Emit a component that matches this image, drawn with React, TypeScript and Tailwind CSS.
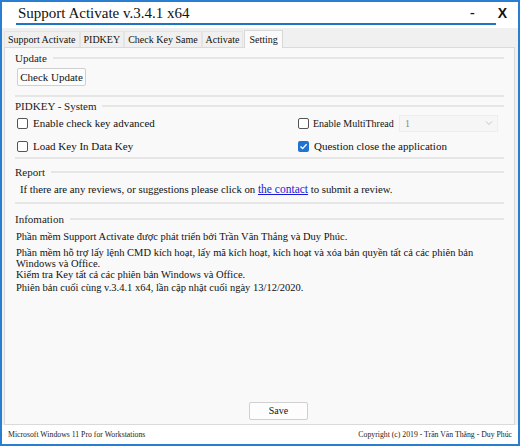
import React from "react";

const serif = { fontFamily: '"Liberation Serif", "Times New Roman", serif' };

function Header({ title }: { title: string }) {
  return (
    <div className="flex items-center gap-[6px] h-[14px] shrink-0">
      <span className="text-[11px] text-[#222] leading-none">{title}</span>
      <div className="flex-1 h-[2px] bg-[#e6e6e6]" />
    </div>
  );
}

function Box({ checked }: { checked?: boolean }) {
  if (checked) {
    return (
      <div className="w-[11px] h-[11px] shrink-0 rounded-[2px] bg-[#1f73d1] flex items-center justify-center">
        <svg width="9" height="9" viewBox="0 0 9 9">
          <path d="M1.5 4.6 L3.6 6.6 L7.6 2.2" stroke="white" strokeWidth="1.4" fill="none" />
        </svg>
      </div>
    );
  }
  return <div className="w-[11px] h-[11px] shrink-0 rounded-[2px] border border-[#555] bg-white" />;
}

export default function App() {
  return (
    <div
      style={serif}
      className="w-[520px] h-[446px] border-2 border-[#2a7ed2] bg-[#f0f0f0] flex flex-col text-[#111] overflow-hidden"
    >
      {/* Title bar */}
      <div className="h-[26px] bg-white flex flex-col shrink-0">
        <div className="flex items-center h-[21px]">
          <span className="pl-[16px] text-[15px] leading-[20px] text-[#111]">
            Support Activate v.3.4.1 x64
          </span>
          <div className="flex-1" />
          <span className="text-[14px] font-bold leading-[20px] mr-[23px]">-</span>
          <span
            className="text-[14px] font-bold leading-[20px] mr-[11px]"
            style={{ fontFamily: '"Liberation Sans", Arial, sans-serif' }}
          >
            X
          </span>
        </div>
        <div className="h-[2px] bg-[#1f74c8] ml-[14px] mr-[22px]" />
      </div>

      {/* Tabs */}
      <div className="flex items-end h-[19px] pl-[2px] shrink-0 bg-[#f0f0f0]">
        {["Support Activate", "PIDKEY", "Check Key Same", "Activate"].map((t) => (
          <div
            key={t}
            className="h-[16px] px-[3px] text-[10px] leading-[16px] whitespace-nowrap border-t border-l border-r border-[#e4e4e4] bg-[#f0f0f0]"
          >
            {t}
          </div>
        ))}
        <div className="h-[18px] ml-[1px] px-[4px] text-[10px] leading-[17px] bg-[#fafafa] border-t border-l border-r border-[#d8d8d8] -mb-[1px] relative z-10">
          Setting
        </div>
      </div>

      {/* Content panel */}
      <div className="flex-1 ml-[2px] mr-[3px] bg-[#f9f9f9] border border-[#dadada] flex flex-col px-[10px] pt-[3px]">
        <Header title="Update" />
        <div className="flex pl-[2px] mt-[3px]">
          <div className="h-[18px] w-[69px] text-center text-[11px] leading-[16px] border border-[#d0d0d0] bg-[#fdfdfd] rounded-[2px]">
            Check Update
          </div>
        </div>
        <div className="h-[2px] bg-[#e6e6e6] mt-[9px] shrink-0" />
        <div className="mt-[2px]">
          <Header title="PIDKEY - System" />
        </div>
        <div className="grid grid-cols-[281px_1fr] mt-[1px] pl-[2px]">
          <div className="flex flex-col">
            <div className="flex items-center gap-[5px] h-[18px] text-[11px] whitespace-nowrap">
              <Box /> <span>Enable check key advanced</span>
            </div>
            <div className="flex items-center gap-[5px] h-[18px] mt-[5px] text-[11px] whitespace-nowrap">
              <Box /> <span>Load Key In Data Key</span>
            </div>
          </div>
          <div className="flex flex-col">
            <div className="flex items-center h-[18px] whitespace-nowrap">
              <Box />
              <span className="ml-[4px] w-[86px] text-[10px]">Enable MultiThread</span>
              <div className="w-[99px] h-[17px] border border-[#eeeeee] bg-[#f6f6f6] flex items-center justify-between pl-[5px] pr-[4px] text-[10px] text-[#888]">
                <span>1</span>
                <svg width="8" height="6" viewBox="0 0 8 6">
                  <path d="M1 1.5 L4 4.5 L7 1.5" stroke="#c4c4c4" strokeWidth="1" fill="none" />
                </svg>
              </div>
            </div>
            <div className="flex items-center gap-[5px] h-[18px] mt-[5px] text-[11px] whitespace-nowrap">
              <Box checked /> <span>Question close the application</span>
            </div>
          </div>
        </div>
        <div className="h-[2px] bg-[#e6e6e6] mt-[2px] shrink-0" />
        <div className="mt-[6px]">
          <Header title="Report" />
        </div>
        <div className="pl-[5px] mt-[3px] text-[10.75px] leading-[14px] whitespace-nowrap">
          If there are any reviews, or suggestions please click on{" "}
          <span className="text-[#1a1ad6] underline text-[11.5px]">the contact</span> to submit a review.
        </div>
        <div className="h-[2px] bg-[#e6e6e6] mt-[6px] shrink-0" />
        <div className="mt-[8px]">
          <Header title="Infomation" />
        </div>
        <div className="text-[10.5px] leading-[11px] mt-[5px] pl-[1px] flex flex-col">
          <div>Phần mềm Support Activate được phát triển bởi Trần Văn Thắng và Duy Phúc.</div>
          <div className="mt-[5px] w-[475px]">
            Phần mềm hỗ trợ lấy lệnh CMD kích hoạt, lấy mã kích hoạt, kích hoạt và xóa bản quyền tất cả các phiên bản
            Windows và Office.
          </div>
          <div>Kiểm tra Key tất cả các phiên bản Windows và Office.</div>
          <div className="mt-[2px]">Phiên bản cuối cùng v.3.4.1 x64, lần cập nhật cuối ngày 13/12/2020.</div>
        </div>
        <div className="flex-1" />
        <div className="flex justify-center mb-[4px] pl-[38px]">
          <div className="w-[59px] h-[18px] text-center text-[10px] leading-[16px] border border-[#d0d0d0] bg-[#fdfdfd] rounded-[2px]">
            Save
          </div>
        </div>
      </div>

      {/* Status bar */}
      <div className="h-[19px] shrink-0 bg-white flex items-center justify-between px-[6px] text-[7.75px] text-[#222]">
        <span>Microsoft Windows 11 Pro for Workstations</span>
        <span>Copyright (c) 2019 - Trần Văn Thắng - Duy Phúc</span>
      </div>
    </div>
  );
}
